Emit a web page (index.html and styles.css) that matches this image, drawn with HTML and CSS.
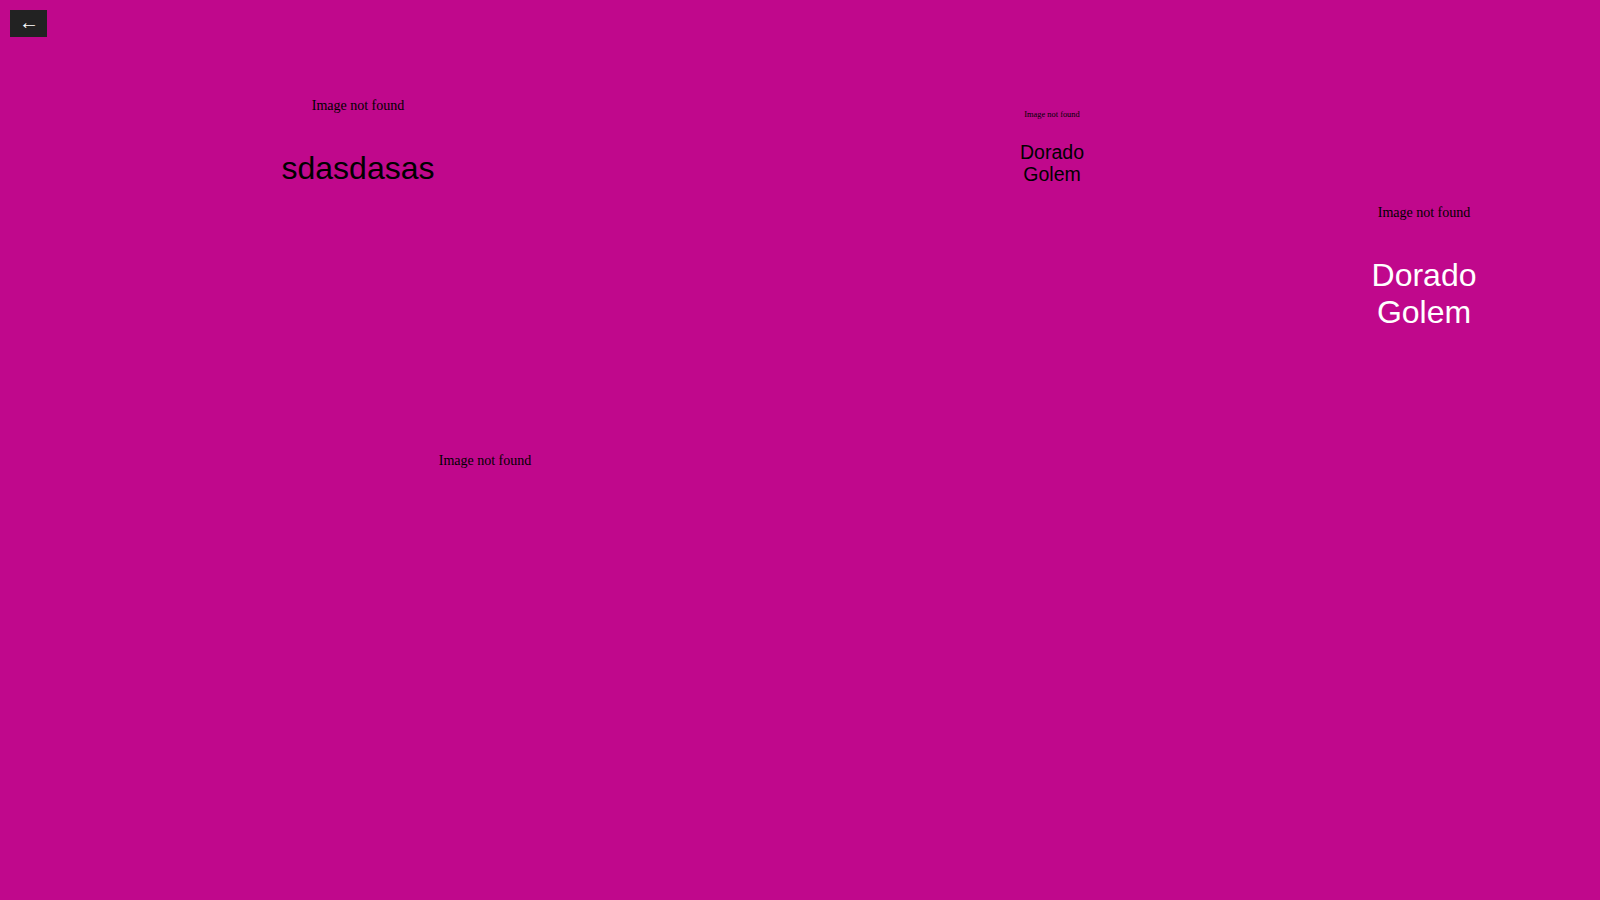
FILE: index.html
```html
<!DOCTYPE html>
<html>
<head>
<meta charset="utf-8">
<link rel="stylesheet" href="styles.css">
</head>
<body>
<button class="back">←</button>
<div class="canvas">
  <div class="item item-a">
    <span class="alt">Image not found</span>
    <h2 class="title title-lg">sdasdasas</h2>
  </div>
  <div class="item item-b">
    <span class="alt alt-sm">Image not found</span>
    <h2 class="title title-sm">Dorado Golem</h2>
  </div>
  <div class="item item-c">
    <span class="alt">Image not found</span>
    <h2 class="title title-lg title-white">Dorado Golem</h2>
  </div>
  <div class="item item-d">
    <span class="alt">Image not found</span>
  </div>
</div>
</body>
</html>
```
FILE: styles.css
```css
html, body {
  margin: 0;
  padding: 0;
  width: 1600px;
  height: 900px;
  background: rgb(192, 8, 140);
  overflow: hidden;
}
body {
  position: relative;
  font-family: "Liberation Serif", serif;
}
.back {
  position: absolute;
  left: 10px;
  top: 10px;
  width: 37px;
  height: 27px;
  padding: 0 0 2px 1px;
  border: none;
  background: #222222;
  color: #ffffff;
  font-family: "Liberation Sans", Arial, sans-serif;
  font-size: 20px;
  line-height: 25px;
  text-align: center;
}
.canvas {
  position: relative;
  width: 1600px;
  height: 900px;
}
.item {
  position: absolute;
  display: flex;
  flex-direction: column;
  align-items: center;
  text-align: center;
}
.alt {
  font-family: "Liberation Serif", serif;
  font-size: 14px;
  line-height: 18px;
  color: #000;
}
.alt-sm {
  font-size: 8.4px;
  line-height: 10px;
}
.title {
  margin: 0;
  font-family: "Liberation Sans", Arial, sans-serif;
  font-weight: normal;
  color: #000;
}
.title-lg {
  font-size: 32px;
  line-height: 37px;
}
.title-sm {
  font-size: 19.5px;
  line-height: 22.4px;
}
.title-white {
  color: #fff;
}
.item-a {
  left: 258px;
  top: 97px;
  width: 200px;
  gap: 35px;
}
.item-b {
  left: 1002px;
  top: 110px;
  width: 100px;
  gap: 21px;
}
.item-b .title {
  width: 90px;
}
.item-c {
  left: 1349px;
  top: 204px;
  width: 150px;
  gap: 35px;
}
.item-c .title {
  width: 130px;
}
.item-d {
  left: 385px;
  top: 452px;
  width: 200px;
}
```
